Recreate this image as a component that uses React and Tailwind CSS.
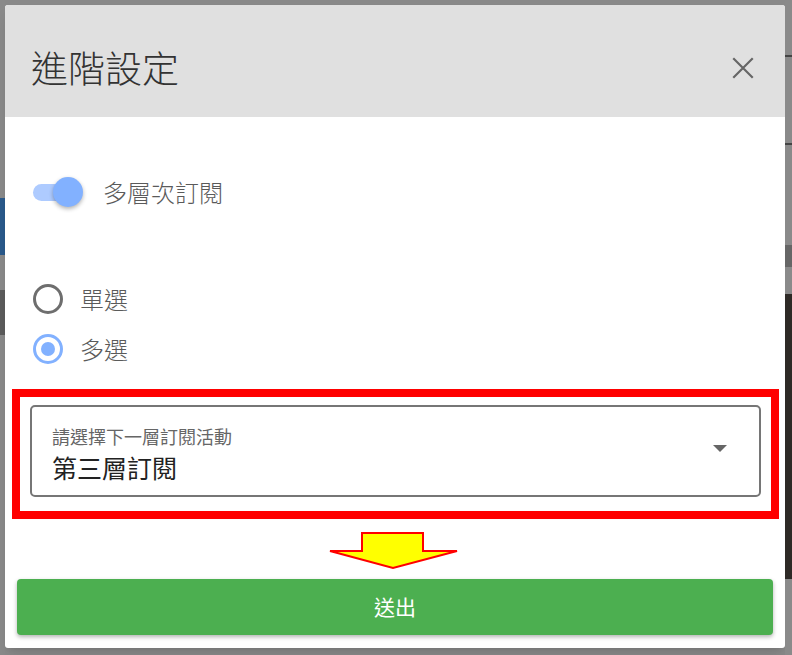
import React from "react";

const font = { fontFamily: '"Noto Sans CJK TC", "Noto Sans", sans-serif' };

const Radio = ({ checked, label }) => (
  <div className="flex items-center h-10">
    <div
      className={
        checked
          ? "w-[30px] h-[30px] rounded-full border-[3px] border-[#82b1ff] flex items-center justify-center"
          : "w-[30px] h-[30px] rounded-full border-[3px] border-[#6e6e6e] flex items-center justify-center"
      }
    >
      {checked && <div className="w-[14px] h-[14px] rounded-full bg-[#82b1ff]" />}
    </div>
    <span className="ml-[17px] text-[24px] font-light text-[#5a5a5a]">{label}</span>
  </div>
);

const App = () => {
  return (
    <div className="w-[792px] h-[655px] bg-[#898989] flex overflow-hidden" style={font}>
      <div className="w-[5px] flex flex-col">
        <div className="h-[198px] bg-[#8a8a8a]" />
        <div className="h-[57px] bg-[#2a5a8c]" />
        <div className="h-[35px] bg-[#8a8a8a]" />
        <div className="h-[45px] bg-[#5c5c5c]" />
        <div className="flex-1 bg-[#8a8a8a]" />
      </div>
      <div className="w-[780px] h-[643px] mt-[5px] bg-white rounded-[3px] shadow-lg flex flex-col overflow-hidden">
        <div className="h-[112px] bg-[#e0e0e0] flex items-center justify-between pl-[26px] pr-[29px]">
          <h1 className="text-[37px] font-light text-[#333] mt-[14px]">進階設定</h1>
          <svg width="26" height="26" viewBox="0 0 24 24" className="mt-[14px]">
            <path d="M3 3 L21 21 M21 3 L3 21" stroke="#666" strokeWidth="2" fill="none" />
          </svg>
        </div>

        <div className="flex items-center h-10 mt-[55px] pl-[28px]">
          <div className="relative w-[46px] h-[18px] flex items-center">
            <div className="w-[46px] h-[17px] rounded-full bg-[#aecbff]" />
            <div className="absolute right-[-4px] w-[30px] h-[30px] rounded-full bg-[#82b1ff] shadow-[0_2px_4px_rgba(0,0,0,0.3)]" />
          </div>
          <span className="ml-[24px] text-[24px] font-light text-[#5a5a5a]">多層次訂閱</span>
        </div>

        <div className="flex flex-col gap-[10px] mt-[67px] pl-[28px]">
          <Radio label="單選" />
          <Radio checked label="多選" />
        </div>

        <div className="mt-[20px] ml-[7px] w-[767px] border-[8px] border-[#ff0000] bg-white pt-2 pb-[14px] px-[10px]">
          <div className="h-[92px] border-2 border-[#767676] rounded-[5px] flex items-center justify-between pl-5 pr-[32px]">
            <div className="flex flex-col mt-[8px]">
              <span className="text-[18px] leading-[20px] text-[#666]">請選擇下一層訂閱活動</span>
              <span className="text-[25px] leading-[34px] text-[#222] mt-[4px]">第三層訂閱</span>
            </div>
            <svg width="14" height="8" viewBox="0 0 14 8" className="mt-[-4px]">
              <path d="M0 0 L14 0 L7 7 Z" fill="#666" />
            </svg>
          </div>
        </div>

        <div className="flex justify-center mt-[13px] ml-[-2px]">
          <svg width="130" height="38" viewBox="0 0 130 38">
            <polygon
              points="33,1 94,1 94,19 128,19 64,36 1,19 33,19"
              fill="#ffff00"
              stroke="#ff0000"
              strokeWidth="2"
            />
          </svg>
        </div>

        <button className="mt-[9px] mx-[12px] h-[56px] bg-[#4caf50] rounded-[4px] shadow-[0_2px_4px_rgba(0,0,0,0.3)] text-white text-[21px]">
          送出
        </button>
      </div>
      <div className="w-[7px] flex flex-col">
        <div className="h-[55px] bg-[#8a8a8a]" />
        <div className="h-[2px] bg-[#444]" />
        <div className="h-[86px] bg-[#8a8a8a]" />
        <div className="h-[2px] bg-[#444]" />
        <div className="h-[100px] bg-[#8a8a8a]" />
        <div className="h-[22px] bg-[#666]" />
        <div className="h-[27px] bg-[#8a8a8a]" />
        <div className="h-[285px] bg-[#2e2a26]" />
        <div className="flex-1 bg-[#8a8a8a]" />
      </div>
    </div>
  );
};

export default App;
